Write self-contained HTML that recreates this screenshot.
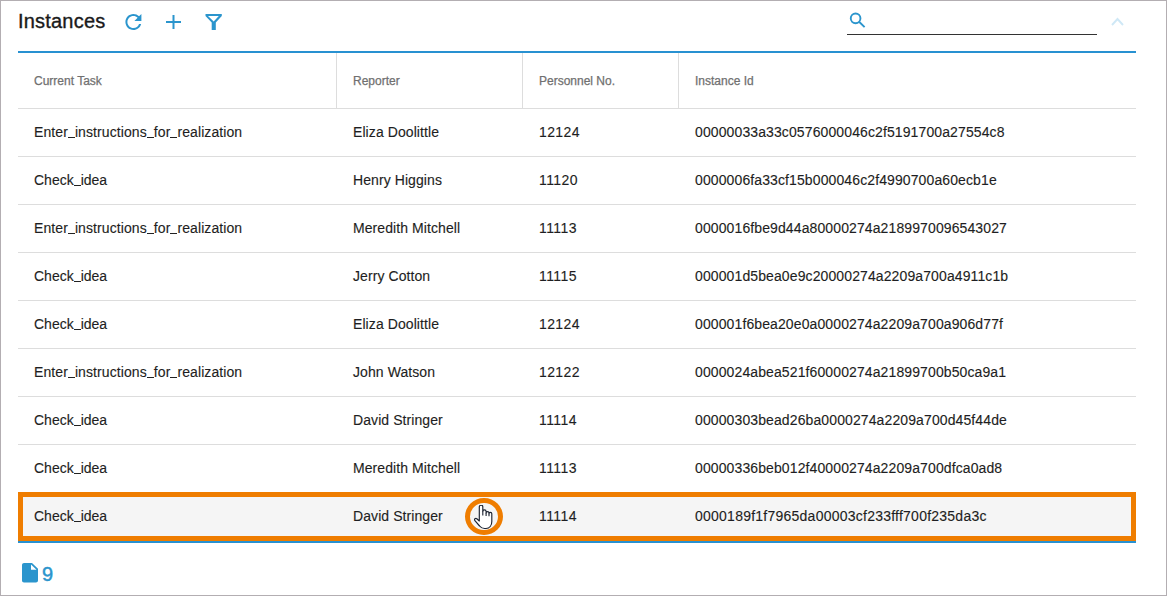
<!DOCTYPE html>
<html><head><meta charset="utf-8">
<style>
*{box-sizing:border-box;margin:0;padding:0}
html,body{width:1167px;height:596px;overflow:hidden;background:#fff;font-family:"Liberation Sans",sans-serif}
#frame{position:absolute;left:0;top:0;width:1167px;height:596px;border:1px solid #b3aeb2}
.title{position:absolute;left:18px;top:9px;font-size:20px;color:#1a1a1a;line-height:24px;-webkit-text-stroke:0.35px #1a1a1a;letter-spacing:0.2px}
.ic{position:absolute}
.blueline{position:absolute;left:18px;top:51px;width:1118px;height:2px;background:#2891d1}
.search-u{position:absolute;left:847px;top:34px;width:250px;height:1px;background:#333}
.hdr{position:absolute;top:53px;height:56px;left:18px;width:1118px;border-bottom:1px solid #ddd}
.hc{position:absolute;top:1px;height:55px;font-size:12px;color:#707070;line-height:55px;padding-left:16px;-webkit-text-stroke:0.25px #707070}
.sep{position:absolute;top:0;height:55px;width:1px;background:#ddd}
.row{position:absolute;left:18px;width:1118px;height:48px;border-bottom:1px solid #ddd}
.c{position:absolute;top:0;line-height:47px;font-size:14px;color:#1e1e22;-webkit-text-stroke:0.12px #1e1e22}
.c1{left:16px}.c2{left:335px;letter-spacing:0.08px}.c3{left:521px;letter-spacing:0.4px}.c4{left:677px;letter-spacing:0.11px}
.u{display:inline-block;width:7px;height:1.2px;background:#222;vertical-align:-1.2px}
.sel{background:#f5f5f5;border:4px solid #ef7d00}
.bottomline{position:absolute;left:18px;top:541px;width:1118px;height:2px;background:#2891d1}
.footer{position:absolute;left:22px;top:563px}
</style></head><body>
<div id="frame"></div>
<div class="title">Instances</div>
<svg class="ic" style="left:125px;top:14px" width="17" height="16" viewBox="4 4 16.2 16"><path fill="#2b95cd" d="M17.65 6.35A7.958 7.958 0 0 0 12 4c-4.42 0-7.99 3.58-7.99 8s3.57 8 7.99 8c3.73 0 6.84-2.55 7.73-6h-2.08A5.99 5.99 0 0 1 12 18c-3.31 0-6-2.69-6-6s2.69-6 6-6c1.66 0 3.14.69 4.22 1.78L13 11h7V4l-2.35 2.35z"/></svg>
<svg class="ic" style="left:166px;top:15px" width="15" height="14" viewBox="0 0 15 14"><rect x="0" y="6" width="15" height="2" fill="#2b95cd"/><rect x="6.5" y="0" width="2" height="14" fill="#2b95cd"/></svg>
<svg class="ic" style="left:205px;top:14px" width="17" height="16" viewBox="0 0 17 16"><path fill="#2b95cd" fill-rule="evenodd" d="M0.5 0H16.8V2L10.8 8.4V16H6.7V8.4L0.5 2z M3 2L8.7 7.6L13.8 2z"/></svg>
<svg class="ic" style="left:849px;top:12px" width="18" height="18" viewBox="0 0 18 18"><circle cx="6.6" cy="6.35" r="4.85" fill="none" stroke="#2b95cd" stroke-width="1.9"/><path d="M9.8 9.5l5.8 5.6" stroke="#2b95cd" stroke-width="1.9"/></svg>
<div class="search-u"></div>
<svg class="ic" style="left:1111px;top:17px" width="13" height="9" viewBox="0 0 13 9"><path d="M1 8l5.5-6 5.5 6" fill="none" stroke="#cfe8f6" stroke-width="1.9"/></svg>
<div class="blueline"></div>
<div class="hdr">
 <div class="hc" style="left:0">Current Task</div>
 <div class="sep" style="left:318px"></div>
 <div class="hc" style="left:319px">Reporter</div>
 <div class="sep" style="left:504px"></div>
 <div class="hc" style="left:505px">Personnel No.</div>
 <div class="sep" style="left:660px"></div>
 <div class="hc" style="left:661px">Instance Id</div>
</div>
<div class="row" style="top:109px"><div class="c c1" style="letter-spacing:0.09px">Enter<i class="u"></i>instructions<i class="u"></i>for<i class="u"></i>realization</div><div class="c c2">Eliza Doolittle</div><div class="c c3">12124</div><div class="c c4">00000033a33c0576000046c2f5191700a27554c8</div></div>
<div class="row" style="top:157px"><div class="c c1">Check<i class="u"></i>idea</div><div class="c c2">Henry Higgins</div><div class="c c3">11120</div><div class="c c4">0000006fa33cf15b000046c2f4990700a60ecb1e</div></div>
<div class="row" style="top:205px"><div class="c c1" style="letter-spacing:0.09px">Enter<i class="u"></i>instructions<i class="u"></i>for<i class="u"></i>realization</div><div class="c c2">Meredith Mitchell</div><div class="c c3">11113</div><div class="c c4">0000016fbe9d44a80000274a2189970096543027</div></div>
<div class="row" style="top:253px"><div class="c c1">Check<i class="u"></i>idea</div><div class="c c2">Jerry Cotton</div><div class="c c3">11115</div><div class="c c4">000001d5bea0e9c20000274a2209a700a4911c1b</div></div>
<div class="row" style="top:301px"><div class="c c1">Check<i class="u"></i>idea</div><div class="c c2">Eliza Doolittle</div><div class="c c3">12124</div><div class="c c4">000001f6bea20e0a0000274a2209a700a906d77f</div></div>
<div class="row" style="top:349px"><div class="c c1" style="letter-spacing:0.09px">Enter<i class="u"></i>instructions<i class="u"></i>for<i class="u"></i>realization</div><div class="c c2">John Watson</div><div class="c c3">12122</div><div class="c c4">0000024abea521f60000274a21899700b50ca9a1</div></div>
<div class="row" style="top:397px"><div class="c c1">Check<i class="u"></i>idea</div><div class="c c2">David Stringer</div><div class="c c3">11114</div><div class="c c4">00000303bead26ba0000274a2209a700d45f44de</div></div>
<div class="row" style="top:445px"><div class="c c1">Check<i class="u"></i>idea</div><div class="c c2">Meredith Mitchell</div><div class="c c3">11113</div><div class="c c4">00000336beb012f40000274a2209a700dfca0ad8</div></div>
<div class="row" style="top:493px;border-bottom:none;background:#f5f5f5"><div class="c c1">Check<i class="u"></i>idea</div><div class="c c2">David Stringer</div><div class="c c3">11114</div><div class="c c4" style="letter-spacing:0.24px">0000189f1f7965da00003cf233fff700f235da3c</div></div>
<div class="bottomline"></div>
<div class="footer">
<svg width="16" height="19.5" viewBox="4 2 16 20" preserveAspectRatio="none" style="position:absolute;left:0;top:0"><path fill="#2b95cd" d="M6 2c-1.1 0-1.99.9-1.99 2L4 20c0 1.1.89 2 1.99 2H18c1.1 0 2-.9 2-2V8l-6-6H6zm7 7V3.5L18.5 9H13z"/></svg><span style="position:absolute;left:20px;top:0;font-size:20px;color:#2b95cd;line-height:20px;top:1px;-webkit-text-stroke:0.45px #2b95cd">9</span>
</div>
<div style="position:absolute;left:18px;top:492px;width:1118px;height:49px;border:5px solid #ef7d00"></div>
<div style="position:absolute;left:465px;top:497.5px;width:38px;height:37.5px;border-radius:50%;border:5px solid #ef7d00"></div>
<svg style="position:absolute;left:474px;top:505px" width="20" height="25" viewBox="0 0 20 25"><path d="M5.3 16V1.8A1.75 1.75 0 0 1 8.8 1.8V6.5A1.65 1.65 0 0 1 12.1 6.5V8A1.45 1.45 0 0 1 15 8V8.7A1.4 1.4 0 0 1 17.8 8.7V16.5C17.8 20.5 15.5 23.5 12 23.5H10.5C8.3 23.5 6.8 22.5 5.6 21L0.9 15.6A1.3 1.3 0 0 1 2.8 13.8L5.3 16z" fill="#fff" stroke="#1b2230" stroke-width="1.15" stroke-linejoin="round"/><path d="M8.8 6.5V10.5M12.1 8V11M15 8.7V11.2" stroke="#1b2230" stroke-width="1.1"/></svg>
</body></html>
